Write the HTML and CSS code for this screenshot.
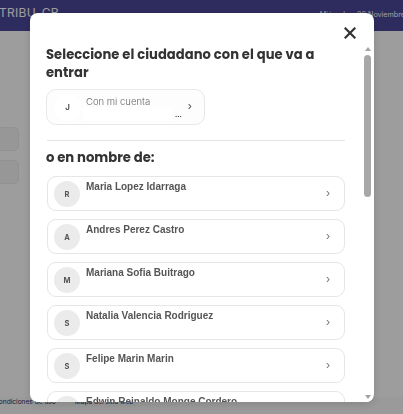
FILE: index.html
```html
<!DOCTYPE html>
<html lang="es">
<head>
<meta charset="utf-8">
<title>TRIBU-CR</title>
<link rel="stylesheet" href="styles.css">
</head>
<body>
<div class="page">
  <header class="topbar">
    <span class="brand">TRIBU-CR</span>
    <span class="date">Miércoles, 26 Noviembre</span>
  </header>
  <main class="main">
    <div class="field"></div>
    <div class="field"></div>
  </main>
  <footer class="footer">
    <span class="flink first">Condiciones de uso</span>
    <span class="flink">Mapa del sitio web</span>
  </footer>
</div>

<div class="overlay">
  <div class="modal">
    <div class="modal-head">
      <button class="close" aria-label="Cerrar">
        <svg width="12" height="12" viewBox="0 0 12 12"><path d="M1.5 1.5 L10.5 10.5 M10.5 1.5 L1.5 10.5" stroke="#333" stroke-width="2.2" stroke-linecap="square"/></svg>
      </button>
    </div>
    <div class="modal-body">
      <div class="scroll">
        <h2 class="title">Seleccione el ciudadano con el que va a entrar</h2>
        <div class="own">
          <span class="own-avatar">J</span>
          <div class="own-info">
            <span class="own-label">Con mi cuenta</span>
            <span class="own-name"></span>
          </div>
          <span class="own-dots">...</span>
          <span class="own-chev">›</span>
        </div>
        <hr class="sep">
        <h3 class="subtitle">o en nombre de:</h3>
        <ul class="list">
          <li class="item"><span class="avatar">R</span><span class="name">Maria Lopez Idarraga</span><span class="chev">›</span></li>
          <li class="item"><span class="avatar">A</span><span class="name">Andres Perez Castro</span><span class="chev">›</span></li>
          <li class="item"><span class="avatar">M</span><span class="name">Mariana Sofia Buitrago</span><span class="chev">›</span></li>
          <li class="item"><span class="avatar">S</span><span class="name">Natalia Valencia Rodriguez</span><span class="chev">›</span></li>
          <li class="item"><span class="avatar">S</span><span class="name">Felipe Marin Marin</span><span class="chev">›</span></li>
          <li class="item"><span class="avatar">E</span><span class="name">Edwin Reinaldo Monge Cordero</span><span class="chev">›</span></li>
        </ul>
      </div>
      <div class="scrollbar">
        <span class="sb-arrow up"></span>
        <div class="sb-track"><div class="sb-thumb"></div></div>
        <span class="sb-arrow down"></span>
      </div>
    </div>
  </div>
</div>
</body>
</html>
```
FILE: styles.css
```css
* { box-sizing: border-box; }
html, body { margin: 0; padding: 0; }
body {
  width: 403px;
  height: 414px;
  overflow: hidden;
  font-family: "Liberation Sans", Arial, sans-serif;
  background: #fff;
}
.page {
  height: 414px;
  display: flex;
  flex-direction: column;
}
.topbar {
  height: 31px;
  background: #4c479a;
  display: flex;
  justify-content: space-between;
  align-items: flex-start;
  padding-top: 5px;
  color: #fff;
  font-family: "Inter", sans-serif;
}
.brand { font-size: 12px; margin-left: -1px; letter-spacing: 0.3px; }
.date { font-size: 7.2px; margin-right: -2px; padding-top: 5px; }
.main {
  flex: 1;
  padding-top: 96px;
  display: flex;
  flex-direction: column;
  gap: 9px;
}
.field {
  width: 25px;
  height: 24px;
  margin-left: -6px;
  border: 1px solid #ececec;
  border-radius: 5px;
  background: #f6f6f6;
}
.footer {
  height: 17px;
  display: flex;
  align-items: flex-start;
  gap: 19px;
  padding-top: 1px;
  font-family: "Inter", sans-serif;
  font-size: 6.6px;
  color: #2c2a5a;
  background: #fafafa;
}
.flink.first { margin-left: -6px; }

.overlay {
  position: fixed;
  inset: 0;
  background: rgba(0, 0, 0, 0.385);
}
.modal {
  position: absolute;
  left: 30px;
  top: 13px;
  width: 344px;
  height: 389px;
  background: #fff;
  border-radius: 8px;
  display: flex;
  flex-direction: column;
  overflow: hidden;
  box-shadow: 0 2px 10px rgba(0,0,0,0.15);
}
.modal-head {
  height: 31px;
  display: flex;
  justify-content: flex-end;
  align-items: flex-start;
  padding: 14px 18px 0 0;
}
.close {
  border: 0;
  background: none;
  padding: 0;
  width: 12px;
  height: 12px;
  display: block;
}
.close svg { display: block; }
.modal-body {
  flex: 1;
  min-height: 0;
  display: flex;
}
.scroll {
  flex: 1;
  overflow: hidden;
  padding: 0 17px 0 16px;
}
.title {
  margin: 0;
  font-family: "Poppins", "Inter", sans-serif;
  font-weight: 700;
  font-size: 13.1px;
  line-height: 17.5px;
  color: #333;
  padding-top: 2px;
  letter-spacing: 0.05px;
}
.own {
  margin-top: 8px;
  width: 159px;
  height: 36px;
  border: 1px solid #e8e8e8;
  border-radius: 10px;
  display: flex;
  align-items: center;
  padding-left: 6px;
  background: #fdfdfd;
}
.own-avatar {
  width: 27px;
  height: 27px;
  border-radius: 50%;
  background: #fff;
  display: flex;
  align-items: center;
  justify-content: center;
  font-family: "Inter", sans-serif;
  font-weight: 600;
  font-size: 8px;
  color: #444;
  margin-left: 1px;
}
.own-info {
  display: flex;
  flex-direction: column;
  margin-left: 2px;
  padding-top: 2px;
}
.own-label {
  font-family: "Inter", sans-serif;
  font-weight: 300;
  font-size: 9.5px;
  color: #666;
  padding-left: 3px;
}
.own-name {
  width: 89px;
  height: 14px;
  background: #fff;
}
.own-dots {
  font-size: 8px;
  color: #444;
  align-self: flex-end;
  margin-bottom: 5px;
  margin-left: 3px;
  font-weight: 700;
  line-height: 8px;
}
.own-chev {
  margin-left: 6px;
  font-size: 12px;
  color: #555;
  margin-top: -2px;
}
.sep {
  margin: 15px 0 0 1px;
  border: 0;
  border-top: 1px solid #e4e4e4;
  height: 0;
}
.subtitle {
  margin: 0;
  padding-top: 7px;
  font-family: "Poppins", "Inter", sans-serif;
  font-weight: 700;
  font-size: 13.2px;
  line-height: 20px;
  color: #333;
}
.list {
  list-style: none;
  margin: 8px 0 0 1px;
  padding: 0;
  display: flex;
  flex-direction: column;
  gap: 8px;
}
.item {
  height: 35px;
  flex-shrink: 0;
  border: 1px solid #e6e6e6;
  border-radius: 9px;
  display: flex;
  align-items: flex-start;
  padding: 0 14px 0 6px;
}
.avatar {
  width: 26px;
  height: 26px;
  margin-top: 4px;
  border-radius: 50%;
  background: #ebebeb;
  display: flex;
  align-items: center;
  justify-content: center;
  font-family: "Inter", sans-serif;
  font-weight: 700;
  font-size: 7.5px;
  color: #555;
  flex-shrink: 0;
}
.name {
  flex: 1;
  margin-left: 6px;
  padding-top: 4px;
  font-weight: 700;
  font-size: 10px;
  color: #555;
}
.chev {
  align-self: center;
  font-size: 12px;
  color: #777;
  margin-top: -1px;
}
.scrollbar {
  width: 11px;
  margin-right: 1px;
  display: flex;
  flex-direction: column;
  align-items: center;
  background: #fff;
}
.sb-arrow {
  width: 0;
  height: 0;
  border-left: 3.5px solid transparent;
  border-right: 3.5px solid transparent;
}
.sb-arrow.up { border-bottom: 4px solid #a3a3a3; margin: 3px 0 3px; }
.sb-arrow.down { border-top: 4px solid #a3a3a3; margin: 3px 0 3px; }
.sb-track {
  flex: 1;
  width: 100%;
  display: flex;
  justify-content: center;
  padding-top: 1px;
}
.sb-thumb {
  width: 7px;
  height: 142px;
  border-radius: 4px;
  background: #a8a8a8;
}
```
